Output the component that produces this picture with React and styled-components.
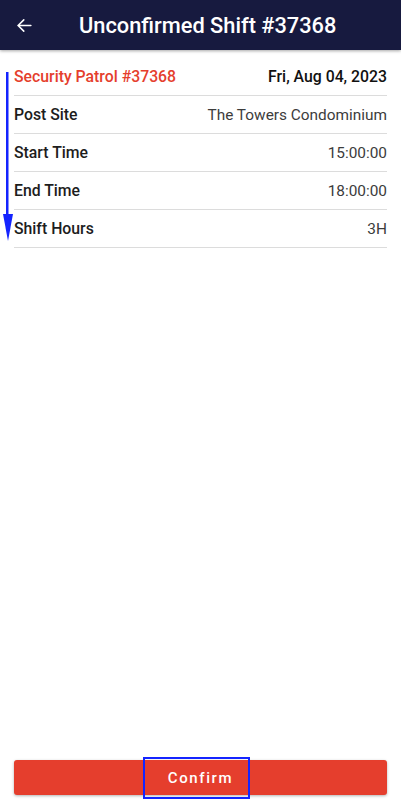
import React from 'react'
import styled, { createGlobalStyle } from 'styled-components'

const Global = createGlobalStyle`
  html, body { margin: 0; padding: 0; }
  body { font-family: Roboto, "Noto Sans", sans-serif; background: #fff; }
  #root { height: 808px; }
`

const Screen = styled.div`
  position: relative;
  height: 808px;
  display: flex;
  flex-direction: column;
  background: #fff;
`

const Header = styled.header`
  height: 50px;
  flex: none;
  display: flex;
  align-items: center;
  background: #171a3f;
  box-shadow: 0 1px 3px rgba(0, 0, 0, 0.35);
  color: #fff;
`

const Back = styled.button`
  width: 50px;
  height: 50px;
  padding: 0 0 0 16px;
  border: 0;
  background: none;
  color: #fff;
  display: flex;
  align-items: center;
`

const Title = styled.h1`
  margin: 0 0 0 29px;
  font-size: 21.8px;
  font-weight: 500;
`

const Details = styled.div`
  padding: 8px 14px 0;
  flex: 1;
`

const Row = styled.div`
  height: 37px;
  display: flex;
  align-items: center;
  justify-content: space-between;
  border-bottom: 1px solid #dcdcdc;
`

const Label = styled.span`
  font-size: 15.8px;
  font-weight: 500;
  color: ${(p) => (p.$accent ? '#e53e2d' : '#1d1d1d')};
`

const Value = styled.span`
  font-size: ${(p) => (p.$strong ? '15.8px' : '15.4px')};
  font-weight: ${(p) => (p.$strong ? 500 : 400)};
  color: ${(p) => (p.$strong ? '#111' : '#3c3c3c')};
`

const Footer = styled.div`
  padding: 0 14px 13px;
`

const ConfirmButton = styled.button`
  width: 100%;
  height: 35px;
  border: 0;
  border-radius: 3px;
  background: #e53e2d;
  color: #fff;
  font-family: Roboto, sans-serif;
  font-size: 15px;
  font-weight: 500;
  letter-spacing: 1.6px;
  box-shadow: 0 1px 3px rgba(0, 0, 0, 0.3);
`

const ScrollMark = styled.svg`
  position: absolute;
  left: 2px;
  top: 72px;
`

const FocusBox = styled.div`
  position: absolute;
  left: 143px;
  top: 757px;
  width: 103px;
  height: 38px;
  border: 2px solid #1424ff;
`

const rows = [
  ['Post Site', 'The Towers Condominium'],
  ['Start Time', '15:00:00'],
  ['End Time', '18:00:00'],
  ['Shift Hours', '3H'],
]

export default function App() {
  return (
    <Screen>
      <Global />
      <Header>
        <Back aria-label="Back">
          <svg width="17" height="17" viewBox="0 0 24 24" fill="none" stroke="#fff" strokeWidth="2.2" strokeLinecap="round">
            <path d="M21 12H3M11 4l-8 8 8 8" />
          </svg>
        </Back>
        <Title>Unconfirmed Shift #37368</Title>
      </Header>
      <Details>
        <Row>
          <Label $accent>Security Patrol #37368</Label>
          <Value $strong>Fri, Aug 04, 2023</Value>
        </Row>
        {rows.map(([k, v]) => (
          <Row key={k}>
            <Label>{k}</Label>
            <Value>{v}</Value>
          </Row>
        ))}
      </Details>
      <Footer>
        <ConfirmButton>Confirm</ConfirmButton>
      </Footer>
      <ScrollMark width="12" height="170" viewBox="0 0 12 170">
        <rect x="4" y="0" width="2.5" height="146" fill="#1424ff" />
        <path d="M1 142 L11 142 L6 169 Z" fill="#1424ff" />
      </ScrollMark>
      <FocusBox />
    </Screen>
  )
}
